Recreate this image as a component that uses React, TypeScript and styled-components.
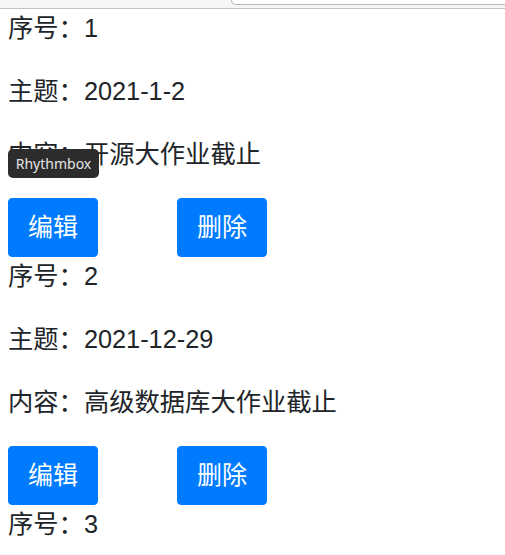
import React from "react";
import styled, { createGlobalStyle } from "styled-components";

const Global = createGlobalStyle`
  html, body { margin: 0; padding: 0; background: #fff; }
  body {
    font-family: "Liberation Sans", "Noto Sans CJK SC", sans-serif;
    color: #212529;
  }
`;

const Page = styled.div`
  position: relative;
  width: 505px;
  height: 555px;
  overflow: hidden;
`;

const ChromeStrip = styled.div`
  display: flex;
  height: 8px;
  background: #f6f6f6;
  border-bottom: 1px solid #c2c2c2;
`;

const UrlBox = styled.div`
  margin-left: 231px;
  flex: 1;
  height: 8px;
  margin-top: -5px;
  background: #fff;
  border: 1px solid #b9b9b9;
  border-right: none;
  border-radius: 0 0 0 5px;
`;

const List = styled.div`
  padding: 0 8px;
`;

const Item = styled.div``;

const Line = styled.p`
  margin: 0 0 25px;
  font-size: 25.3px;
  line-height: 38px;
`;

const Actions = styled.div`
  display: flex;
  gap: 79px;
`;

const Button = styled.button`
  box-sizing: border-box;
  height: 59px;
  font-family: "Liberation Sans", "Noto Sans CJK SC", sans-serif;
  font-size: 25px;
  line-height: 1.5;
  padding: 0 19px;
  color: #fff;
  background: #007bff;
  border: 1px solid #007bff;
  border-radius: 4px;
  cursor: pointer;
`;

const Tooltip = styled.div`
  position: absolute;
  left: 8px;
  top: 149px;
  width: 91px;
  height: 29px;
  box-sizing: border-box;
  background: #2c2c2c;
  color: #e6e6e6;
  border-radius: 5px;
  font-family: "Noto Sans", "DejaVu Sans", sans-serif;
  font-size: 14px;
  display: flex;
  align-items: center;
  justify-content: center;
`;

const items = [
  { id: 1, title: "2021-1-2", content: "开源大作业截止" },
  { id: 2, title: "2021-12-29", content: "高级数据库大作业截止" },
  { id: 3, title: "", content: "" },
];

export default function App() {
  return (
    <Page>
      <Global />
      <ChromeStrip>
        <UrlBox />
      </ChromeStrip>
      <List>
        {items.map((it) => (
          <Item key={it.id}>
            <Line>序号：{it.id}</Line>
            <Line>主题：{it.title}</Line>
            <Line>内容：{it.content}</Line>
            <Actions>
              <Button>编辑</Button>
              <Button>删除</Button>
            </Actions>
          </Item>
        ))}
      </List>
      <Tooltip>Rhythmbox</Tooltip>
    </Page>
  );
}
